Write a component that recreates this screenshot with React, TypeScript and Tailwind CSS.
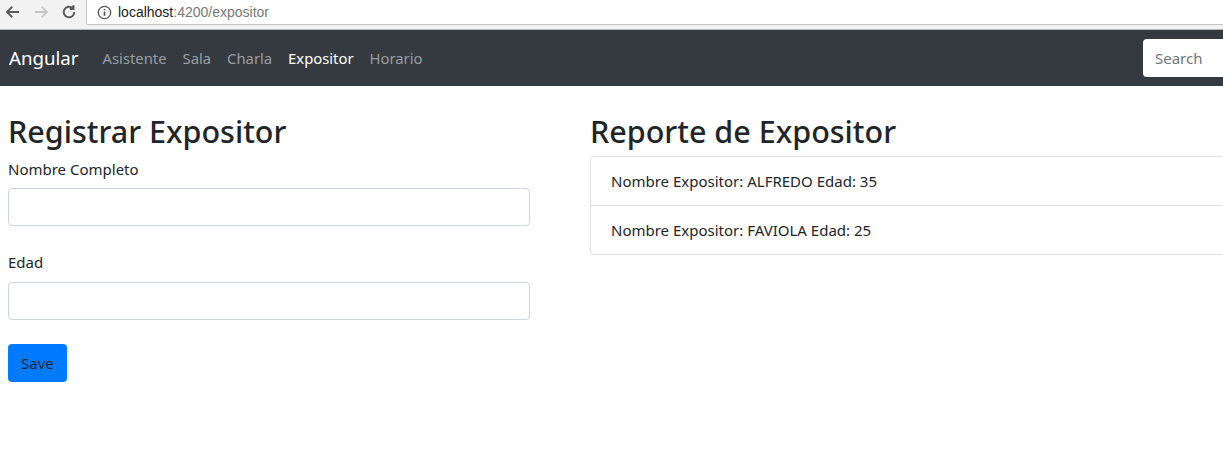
import { useState } from "react";

const expositores = [
  { nombre: "ALFREDO", edad: 35 },
  { nombre: "FAVIOLA", edad: 25 },
];

const BrowserBar = () => (
  <div className="h-[30px] bg-[#f2f2f2] border-b border-[#b8b8b8] flex items-start">
    <div className="w-[86px] h-[24px] flex items-center pl-[4px] gap-[10px] text-[#5a5a5a]">
      <svg width="18" height="18" viewBox="0 0 24 24" fill="none" stroke="#5a5a5a" strokeWidth="2.4">
        <path d="M20 12H5M11 5l-7 7 7 7" />
      </svg>
      <svg width="18" height="18" viewBox="0 0 24 24" fill="none" stroke="#c8c8c8" strokeWidth="2.4">
        <path d="M4 12h15M13 5l7 7-7 7" />
      </svg>
      <svg width="18" height="18" viewBox="0 0 24 24" fill="none" stroke="#5a5a5a" strokeWidth="2.6">
        <path d="M19 12a7 7 0 1 1-2.1-5" />
        <path d="M18 3v5h-5" fill="#5a5a5a" />
      </svg>
    </div>
    <div className="flex-1 h-[25px] bg-white border-l border-b border-[#c4c4c4] rounded-bl-[2px] flex items-center pl-[10px] gap-[6px] font-['Liberation_Sans',sans-serif] text-[14px]">
      <svg width="15" height="15" viewBox="0 0 16 16" fill="none" stroke="#555" strokeWidth="1.4">
        <circle cx="8" cy="8" r="6.6" />
        <path d="M8 7v4.5M8 4.3v1.2" strokeWidth="1.8" />
      </svg>
      <span className="text-[#222]">
        localhost<span className="text-[#777]">:4200/expositor</span>
      </span>
    </div>
  </div>
);

const Navbar = () => (
  <nav className="h-[56px] bg-[#343a40] flex items-center pl-[9px] overflow-hidden">
    <span className="text-white text-[18.7px] mr-[16px]">Angular</span>
    <ul className="flex text-[14.8px]">
      {["Asistente", "Sala", "Charla", "Expositor", "Horario"].map((l) => (
        <li
          key={l}
          className={
            "px-[8px] " +
            (l === "Expositor" ? "text-white" : "text-[rgba(255,255,255,0.5)]")
          }
        >
          {l}
        </li>
      ))}
    </ul>
    <input
      placeholder="Search"
      className="ml-auto mr-[-160px] w-[240px] h-[38px] rounded-[4px] bg-white px-[12px] text-[15px] placeholder:text-[#6c757d] outline-none"
    />
  </nav>
);

const App = () => {
  const [nombre, setNombre] = useState("");
  const [edad, setEdad] = useState("");

  return (
    <div className="w-[1223px] h-[451px] overflow-hidden bg-white font-['Noto_Sans',sans-serif] text-[#212529]">
      <BrowserBar />
      <Navbar />
      <div className="flex pt-[21px] pl-[8px]">
        <form
          onSubmit={(e) => e.preventDefault()}
          className="w-[522px] shrink-0 mr-[60px]"
        >
          <h1 className="text-[30.5px] leading-[48px] font-medium mb-[2px]">
            Registrar Expositor
          </h1>
          <label className="block text-[15px] leading-[24px] mb-[7px]">
            Nombre Completo
          </label>
          <input
            value={nombre}
            onChange={(e) => setNombre(e.target.value)}
            className="block w-full h-[38px] border border-[#ced4da] rounded-[4px] px-[12px] outline-none"
          />
          <label className="block text-[15px] leading-[24px] mt-[24px] mb-[8px]">
            Edad
          </label>
          <input
            value={edad}
            onChange={(e) => setEdad(e.target.value)}
            className="block w-full h-[38px] border border-[#ced4da] rounded-[4px] px-[12px] outline-none"
          />
          <button className="mt-[24px] h-[38px] px-[13px] bg-[#007bff] rounded-[4px] text-[15px] text-[#212529]">
            Save
          </button>
        </form>
        <div className="w-[700px] shrink-0">
          <h1 className="text-[30.5px] leading-[48px] font-medium mb-[1px]">
            Reporte de Expositor
          </h1>
          <ul className="border border-[#dfdfdf] rounded-[4px]">
            {expositores.map((x, i) => (
              <li
                key={x.nombre}
                className={
                  "px-[20px] py-[12px] text-[15px] leading-[24px] " +
                  (i > 0 ? "border-t border-[#dfdfdf]" : "")
                }
              >
                Nombre Expositor: {x.nombre} Edad: {x.edad}
              </li>
            ))}
          </ul>
        </div>
      </div>
    </div>
  );
};

export default App;
